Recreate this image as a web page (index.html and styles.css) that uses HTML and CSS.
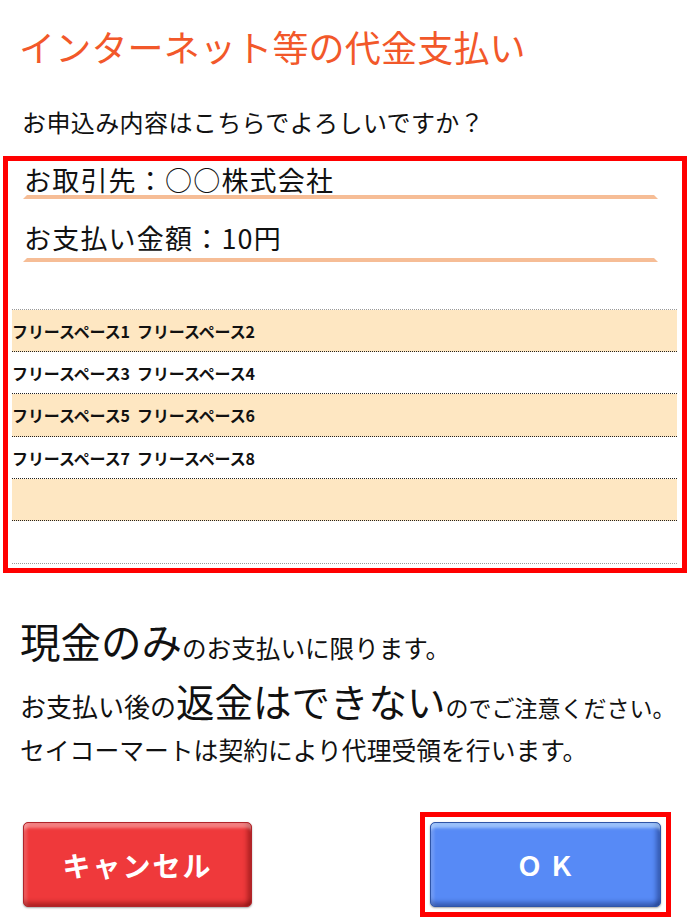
FILE: index.html
```html
<!DOCTYPE html>
<html lang="ja">
<head>
<meta charset="utf-8">
<title>インターネット等の代金支払い</title>
<link rel="stylesheet" href="styles.css">
</head>
<body>
<div class="page">
  <h1 class="title">インターネット等の代金支払い</h1>
  <p class="question">お申込み内容はこちらでよろしいですか？</p>

  <section class="confirm">
    <div class="field field-first"><span class="field-text">お取引先：○○株式会社</span></div>
    <div class="field field-second"><span class="field-text">お支払い金額：10円</span></div>

    <div class="free">
      <div class="free-row band r42">フリースペース1&nbsp;&nbsp;フリースペース2</div>
      <div class="free-row r42">フリースペース3&nbsp;&nbsp;フリースペース4</div>
      <div class="free-row band r43">フリースペース5&nbsp;&nbsp;フリースペース6</div>
      <div class="free-row r42">フリースペース7&nbsp;&nbsp;フリースペース8</div>
      <div class="free-row band r42"></div>
      <div class="free-row r43"></div>
    </div>
  </section>

  <div class="notice">
    <div class="notice-line line1"><span class="big1">現金のみ</span><span class="s1">のお支払いに限ります。</span></div>
    <div class="notice-line line2"><span class="s2a">お支払い後の</span><span class="big2">返金はできない</span><span class="s2b">のでご注意ください。</span></div>
    <div class="notice-line line3">セイコーマートは契約により代理受領を行います。</div>
  </div>

  <div class="actions">
    <button class="btn btn-cancel" type="button">キャンセル</button>
    <div class="ok-frame">
      <button class="btn btn-ok" type="button">ＯＫ</button>
    </div>
  </div>
</div>
</body>
</html>
```

FILE: styles.css
```css
* { box-sizing: border-box; }

html, body {
  margin: 0;
  padding: 0;
  background: #ffffff;
}

body {
  font-family: "Noto Sans CJK JP", "Noto Sans", sans-serif;
  color: #111111;
}

.page {
  width: 688px;
  height: 918px;
  overflow: hidden;
}

.title {
  margin: 28px 0 0 19px;
  font-size: 36px;
  line-height: 36px;
  font-weight: 400;
  color: #f2582a;
  letter-spacing: 0.2px;
}

.question {
  margin: 46px 0 0 22px;
  font-size: 24px;
  line-height: 24px;
  letter-spacing: 0.4px;
}

.confirm {
  margin: 22px 0 0 3px;
  width: 684px;
  border: 5px solid #ff0000;
  padding: 0 5px 4px 5px;
}

.field {
  margin: 0 19px 0 10px;
  border-bottom: 4px solid #f6bd96;
  border-left: 4px solid transparent;
  border-right: 4px solid transparent;
  padding-left: 0;
  font-size: 27px;
  line-height: 30px;
  letter-spacing: 1.2px;
}

.field-text {
  margin-left: -3px;
}

.field-first {
  margin-top: 4px;
}

.field-second {
  margin-top: 24px;
  padding-bottom: 5px;
}

.free {
  margin: 47px 0 0 -1px;
  border-top: 1px dotted #9a9a9a;
  border-bottom: 1px dotted #9a9a9a;
}

.free-row {
  display: flex;
  align-items: center;
  border-bottom: 1px dotted #222222;
  font-size: 16px;
  font-weight: 700;
  letter-spacing: -0.1px;
  padding-left: 0;
  white-space: pre;
}

.free-row:last-child {
  border-bottom: none;
}

.r42 { height: 42px; }
.r43 { height: 43px; }
.free-row:last-child.r43 { height: 42px; }

.band {
  background: #fee7c2;
}

.notice {
  margin: 44px 0 0 20px;
  color: #111111;
}

.notice-line {
  white-space: nowrap;
}

.line1 {
  line-height: 48px;
}

.line2 {
  margin-top: 1px;
  line-height: 48px;
}

.line3 {
  margin-top: -3px;
  line-height: 36px;
  font-size: 24.8px;
}

.big1 { font-size: 40.5px; }
.s1 { font-size: 24.6px; }
.s2a { font-size: 26px; }
.big2 { font-size: 38.5px; }
.s2b { font-size: 23px; }

.actions {
  display: flex;
  justify-content: space-between;
  align-items: center;
  margin-top: 45px;
  padding: 0 17px 0 23px;
}

.btn {
  display: flex;
  align-items: center;
  justify-content: center;
  width: 229px;
  height: 85px;
  border-radius: 5px;
  font-family: "Noto Sans CJK JP", "Noto Sans", sans-serif;
  font-weight: 700;
  color: #ffffff;
  padding: 0;
  margin: 0;
  cursor: pointer;
}

.btn-cancel {
  background: #ef393b;
  border: 1px solid #b0242a;
  font-size: 28px;
  letter-spacing: 2px;
  box-shadow:
    inset 0 7px 3px -2px rgba(255, 255, 255, 0.36),
    inset 0 -6px 4px -2px rgba(90, 0, 0, 0.38),
    inset -6px 0 4px -2px rgba(90, 0, 0, 0.38),
    inset 5px 0 3px -2px rgba(255, 255, 255, 0.18),
    0 1px 2px rgba(0, 0, 0, 0.35);
}

.ok-frame {
  border: 5px solid #ff0000;
  padding: 5px;
}

.btn-ok {
  width: 231px;
  background: #578af6;
  border: 1px solid #2f55a8;
  font-size: 26px;
  letter-spacing: 6px;
  padding-left: 6px;
  box-shadow:
    inset 0 7px 3px -2px rgba(200, 230, 255, 0.6),
    inset 0 -6px 4px -2px rgba(10, 30, 90, 0.38),
    inset -6px 0 4px -2px rgba(10, 30, 90, 0.38),
    inset 5px 0 3px -2px rgba(255, 255, 255, 0.18),
    0 1px 2px rgba(0, 0, 0, 0.35);
}
```
